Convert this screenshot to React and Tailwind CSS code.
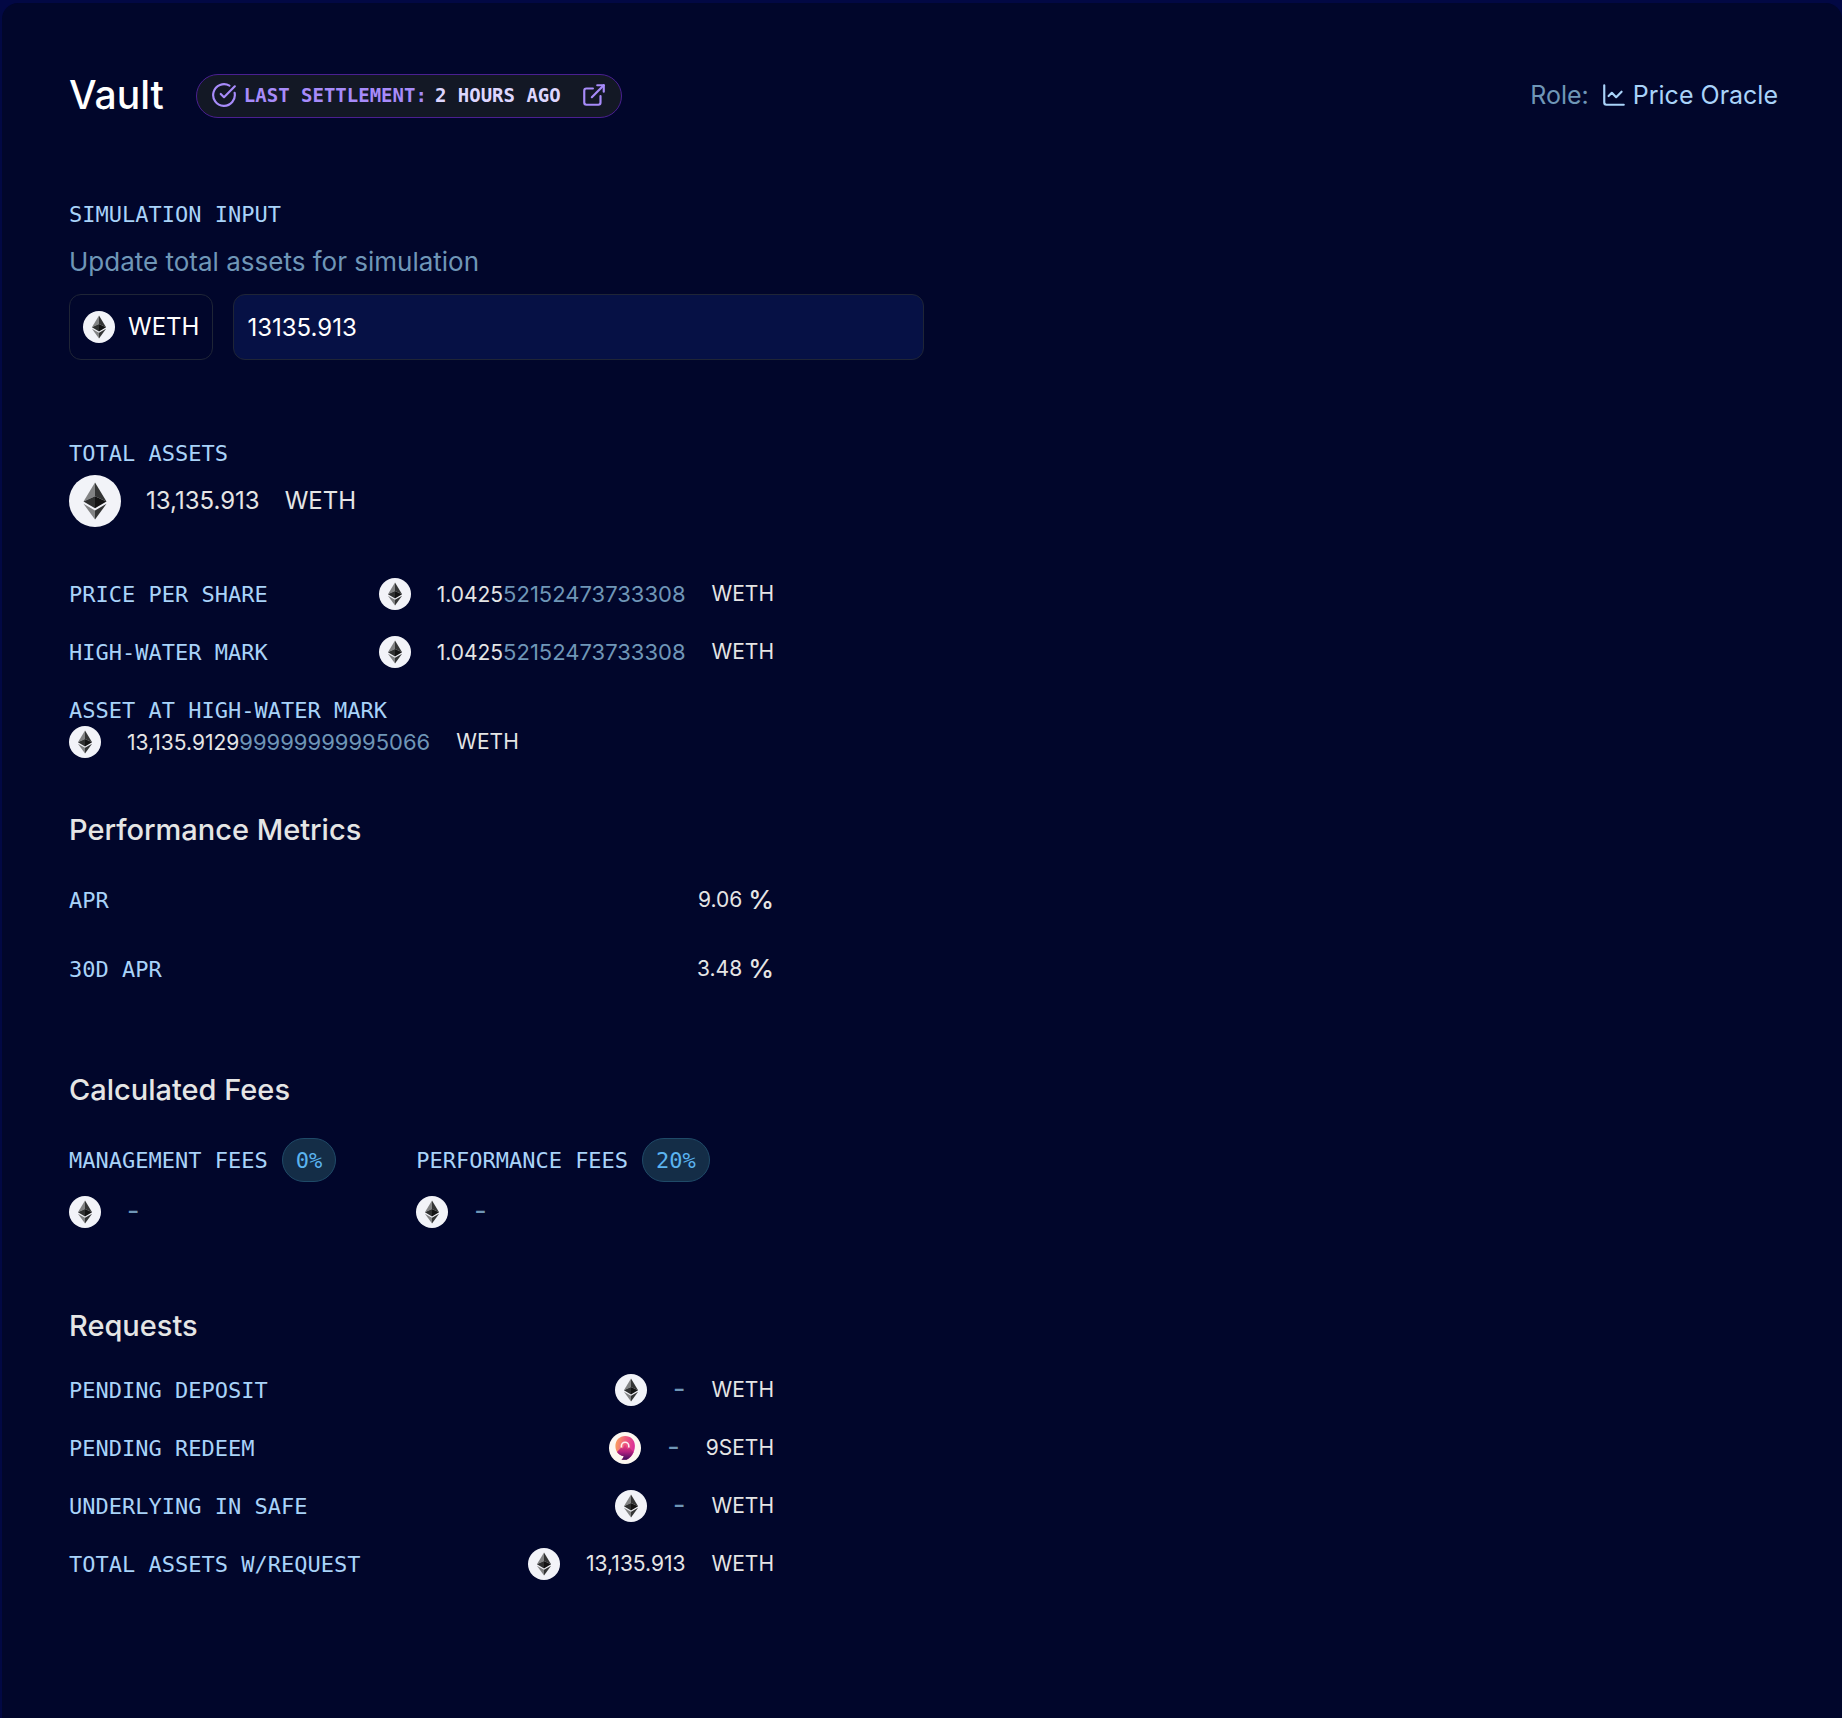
import { useState } from 'react';
import { ChartLine, CircleCheckBig, ExternalLink } from 'lucide-react';

const pendingRequests = [
  { label: 'Pending deposit', symbol: 'WETH' },
  { label: 'Pending redeem', symbol: '9SETH' },
  { label: 'Underlying in safe', symbol: 'WETH' },
  { label: 'Total assets w/request', value: '13,135.913', symbol: 'WETH' },
];

const metrics = [
  { label: 'APR', value: '9.06' },
  { label: '30D APR', value: '3.48' },
];

const fees = [
  { label: 'Management fees', rate: '0%' },
  { label: 'Performance fees', rate: '20%' },
];

const EthIcon = ({ className = 'size-8' }) => (
  <svg viewBox="0 0 52 52" className={`${className} shrink-0`} aria-hidden="true">
    <circle cx="26" cy="26" r="26" fill="#f2f3f8" />
    <path d="M26 7.5 14.5 26.5 26 21.3z" fill="#828384" />
    <path d="M26 7.5 37.5 26.5 26 21.3z" fill="#343535" />
    <path d="M14.5 26.5 26 21.3v12z" fill="#2f3030" />
    <path d="M37.5 26.5 26 21.3v12z" fill="#131313" />
    <path d="M14.5 28.8 26 35.5V44.5z" fill="#828384" />
    <path d="M37.5 28.8 26 35.5V44.5z" fill="#343535" />
  </svg>
);

const NineSethIcon = ({ className = 'size-8' }) => (
  <svg viewBox="0 0 32 32" className={`${className} shrink-0`} aria-hidden="true">
    <defs>
      <linearGradient id="nine-ring" x1="0" y1="0.3" x2="1" y2="0.5">
        <stop offset="0" stopColor="#f9a05c" />
        <stop offset="0.5" stopColor="#ee5a80" />
        <stop offset="1" stopColor="#d92c9a" />
      </linearGradient>
      <linearGradient id="nine-hill" x1="0" y1="0" x2="0" y2="1">
        <stop offset="0" stopColor="#f0457c" />
        <stop offset="0.5" stopColor="#b5217f" />
        <stop offset="1" stopColor="#3a0d5e" />
      </linearGradient>
    </defs>
    <circle cx="16" cy="16" r="16" fill="#fdf8f0" />
    <path
      d="M16.2 4C21.8 4 25.9 8.2 25.9 13.7 25.9 20.500 22 26 17.500 27.800H12.300C13.400 27 14.300 25.700 14.800 24.200 9.800 23.500 6.400 19.500 6.400 14 6.400 8.200 10.600 4 16.200 4z"
      fill="url(#nine-ring)"
    />
    <path
      d="M16 12l2.600 5 2-1.300 4 4.300C23 23.500 20.500 26.500 17.500 27.800H12.300c1.100-.8 2-2.100 2.500-3.600-3-.4-5.300-2-6.800-4.300l4.300-4.300 1.500 1z"
      fill="url(#nine-hill)"
    />
    <path d="M12.400 15.500v-1.500a3.700 3.700 0 0 1 7.400 0v1.500" fill="none" stroke="#fdf0f0" strokeWidth="1.6" />
  </svg>
);

const Label = ({ children, as: Tag = 'span', ...props }) => (
  <Tag
    className="block pt-[2px] font-['DejaVu_Sans_Mono',monospace] text-[22px] leading-[30px] uppercase text-[#a9d3f9]"
    {...props}
  >
    {children}
  </Tag>
);

const Amount = ({ value, rest, symbol }) => (
  <div className="flex h-8 items-center text-[21px] leading-8 text-[#e5e5e5]">
    {symbol === '9SETH' ? <NineSethIcon /> : <EthIcon />}
    <span className="ml-[26px]">
      {value ?? <span className="text-[27px] text-[#6f96b7]">-</span>}
      {rest && <span className="text-[22px] text-[#6f96b7]">{rest}</span>}
    </span>
    {symbol && <span className="ml-[26px]">{symbol}</span>}
  </div>
);

const Row = ({ label, children }) => (
  <div className="flex items-center justify-between">
    <Label>{label}</Label>
    {children}
  </div>
);

const SectionTitle = ({ children }) => (
  <h2 className="text-[29px] leading-10 font-medium text-[#e5e5e5]">{children}</h2>
);

const App = () => {
  const [totalAssets, setTotalAssets] = useState('13135.913');

  return (
    <div className="min-h-screen bg-[#020844] pt-[3px] pl-[2px] font-[Inter,sans-serif]">
      <main className="min-h-screen rounded-t-2xl bg-[#01062b] pt-[71px] pr-16 pb-16 pl-[67px]">
        {/* Header */}
        <header className="flex items-center justify-between">
          <div className="flex items-center gap-8">
            <h1 className="pb-[2px] text-[39px] leading-10 font-medium text-white">Vault</h1>
            <a
              href="#settlement"
              className="flex h-11 items-center rounded-full border border-[#4a1f91] bg-[#131825] px-[14px] pb-[2px] font-['DejaVu_Sans_Mono',monospace] text-[19px] font-bold uppercase"
            >
              <CircleCheckBig size={26} className="text-[#a78bfa]" />
              <span className="ml-[7px] text-[#a78bfa]">Last settlement:</span>
              <span className="ml-2 text-[#ddd6fe]">2 hours ago</span>
              <ExternalLink size={26} className="ml-5 text-[#a78bfa]" />
            </a>
          </div>
          <div className="flex items-center pb-[2px] text-[25px] leading-10">
            <span className="text-[#6f96b7]">Role:</span>
            <ChartLine size={26} className="ml-3 text-[#a9d3f9]" />
            <span className="ml-[6px] text-[#a9d3f9]">Price Oracle</span>
          </div>
        </header>

        {/* Simulation input */}
        <section className="mt-20 w-1/2">
          <Label as="label" htmlFor="total-assets">Simulation input</Label>
          <p className="mt-[13px] text-[26px] leading-[38px] text-[#6f96b7]">Update total assets for simulation</p>
          <div className="mt-[13px] flex gap-5">
            <div className="flex h-[66px] items-center gap-[13px] rounded-xl border border-[#1f2536] px-[13px] text-[24px] text-white">
              <EthIcon />
              WETH
            </div>
            <input
              id="total-assets"
              type="text"
              inputMode="decimal"
              value={totalAssets}
              onChange={(e) => setTotalAssets(e.target.value)}
              className="h-[66px] min-w-0 flex-1 rounded-xl border border-[#1f2536] bg-[#061145] px-[13px] text-[24px] text-white outline-none"
            />
          </div>
        </section>

        <div className="max-w-[705px]">
          {/* Totals */}
          <section className="mt-[77px]">
            <Label>Total assets</Label>
            <div className="mt-[6px] flex items-center gap-[25px] text-[24px] text-[#e5e5e5]">
              <EthIcon className="size-[52px]" />
              <span>13,135.913</span>
              <span>WETH</span>
            </div>
            <div className="mt-[51px] flex flex-col gap-[26px]">
              <Row label="Price per share">
                <Amount value="1.0425" rest="52152473733308" symbol="WETH" />
              </Row>
              <Row label="High-water mark">
                <Amount value="1.0425" rest="52152473733308" symbol="WETH" />
              </Row>
              <div>
                <Label>Asset at high-water mark</Label>
                <Amount value="13,135.9129" rest="99999999995066" symbol="WETH" />
              </div>
            </div>
          </section>

          {/* Performance */}
          <section className="mt-[52px]">
            <SectionTitle>Performance Metrics</SectionTitle>
            <div className="mt-[34px] flex flex-col gap-[37px]">
              {metrics.map((metric) => (
                <Row key={metric.label} label={metric.label}>
                  <div className="flex items-center gap-[6px] leading-8 text-[#e5e5e5]">
                    <span className="text-[21px]">{metric.value}</span>
                    <span className="text-[26px] font-medium">%</span>
                  </div>
                </Row>
              ))}
            </div>
          </section>

          {/* Fees */}
          <section className="mt-[85px]">
            <SectionTitle>Calculated Fees</SectionTitle>
            <div className="mt-7 flex gap-20">
              {fees.map((fee) => (
                <div key={fee.label} className="flex flex-col gap-[14px]">
                  <div className="flex items-center gap-[14px]">
                    <Label>{fee.label}</Label>
                    <span className="flex h-11 items-center rounded-full border border-[#1f4a68] bg-[#142d47] px-[13px] font-['DejaVu_Sans_Mono',monospace] text-[22px] text-[#5bb4f0]">
                      {fee.rate}
                    </span>
                  </div>
                  <Amount />
                </div>
              ))}
            </div>
          </section>

          {/* Requests */}
          <section className="mt-[78px]">
            <SectionTitle>Requests</SectionTitle>
            <div className="mt-7 flex flex-col gap-[26px]">
              {pendingRequests.map((request) => (
                <Row key={request.label} label={request.label}>
                  <Amount value={request.value} symbol={request.symbol} />
                </Row>
              ))}
            </div>
          </section>
        </div>
      </main>
    </div>
  );
};

export default App;
